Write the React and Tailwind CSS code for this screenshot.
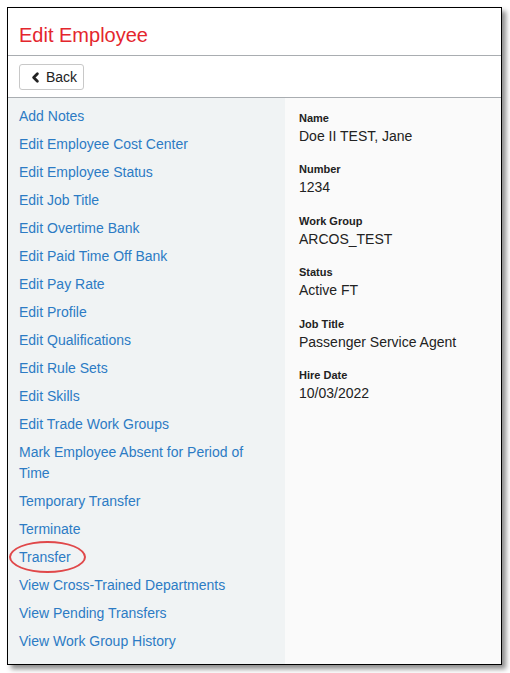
import { ChevronLeft } from "lucide-react";

const ACTIONS = [
  "Add Notes",
  "Edit Employee Cost Center",
  "Edit Employee Status",
  "Edit Job Title",
  "Edit Overtime Bank",
  "Edit Paid Time Off Bank",
  "Edit Pay Rate",
  "Edit Profile",
  "Edit Qualifications",
  "Edit Rule Sets",
  "Edit Skills",
  "Edit Trade Work Groups",
  "Mark Employee Absent for Period of Time",
  "Temporary Transfer",
  "Terminate",
  "Transfer",
  "View Cross-Trained Departments",
  "View Pending Transfers",
  "View Work Group History",
];

const DETAILS = [
  { label: "Name", value: "Doe II TEST, Jane" },
  { label: "Number", value: "1234" },
  { label: "Work Group", value: "ARCOS_TEST" },
  { label: "Status", value: "Active FT" },
  { label: "Job Title", value: "Passenger Service Agent" },
  { label: "Hire Date", value: "10/03/2022" },
];

const App = () => {
  return (
    <div
      className="w-[510px] h-[673px] bg-white pt-[7px] pl-[7px]"
      style={{ fontFamily: '"Liberation Sans", Arial, sans-serif' }}
    >
      <div className="w-[495px] h-[658px] border border-black bg-white flex flex-col shadow-[4px_4px_5px_rgba(0,0,0,0.45)]">
        {/* header */}
        <div className="h-[48px] border-b border-[#a9adb1] pl-[11px] pt-[15px]">
          <h1 className="text-[20px] leading-[24px] text-[#e4262d]">Edit Employee</h1>
        </div>

        {/* toolbar */}
        <div className="h-[42px] border-b border-[#a9adb1] pl-[11px] pt-[8px]">
          <button className="h-[26px] w-[65px] flex items-center gap-[3px] pl-[8px] border border-[#c8c8c8] rounded-[3px] bg-white text-[14px] text-[#222]">
            <ChevronLeft size={15} strokeWidth={4.5} className="text-[#222]" />
            Back
          </button>
        </div>

        {/* body */}
        <div className="flex flex-1">
          <div className="relative w-[277px] bg-[#f0f3f4] pl-[11px] pr-[11px] pt-[8px]">
            {ACTIONS.map((a) => (
              <a
                key={a}
                href="#"
                className="block text-[14px] leading-[21px] mb-[7px] text-[#2c7bc4]"
              >
                {a}
              </a>
            ))}
            <div className="absolute left-[1px] top-[443px] w-[77px] h-[32px] rounded-[50%] border-[2.5px] border-[#e0484a]" />
          </div>
          <div className="flex-1 bg-[#fafafa] pl-[14px] pt-[13px]">
            {DETAILS.map((d) => (
              <div key={d.label} className="mb-[16.4px]">
                <p className="text-[11px] leading-[15px] font-bold text-[#222]">{d.label}</p>
                <p className="text-[14px] leading-[20px] text-[#222]">{d.value}</p>
              </div>
            ))}
          </div>
        </div>
      </div>
    </div>
  );
};

export default App;
